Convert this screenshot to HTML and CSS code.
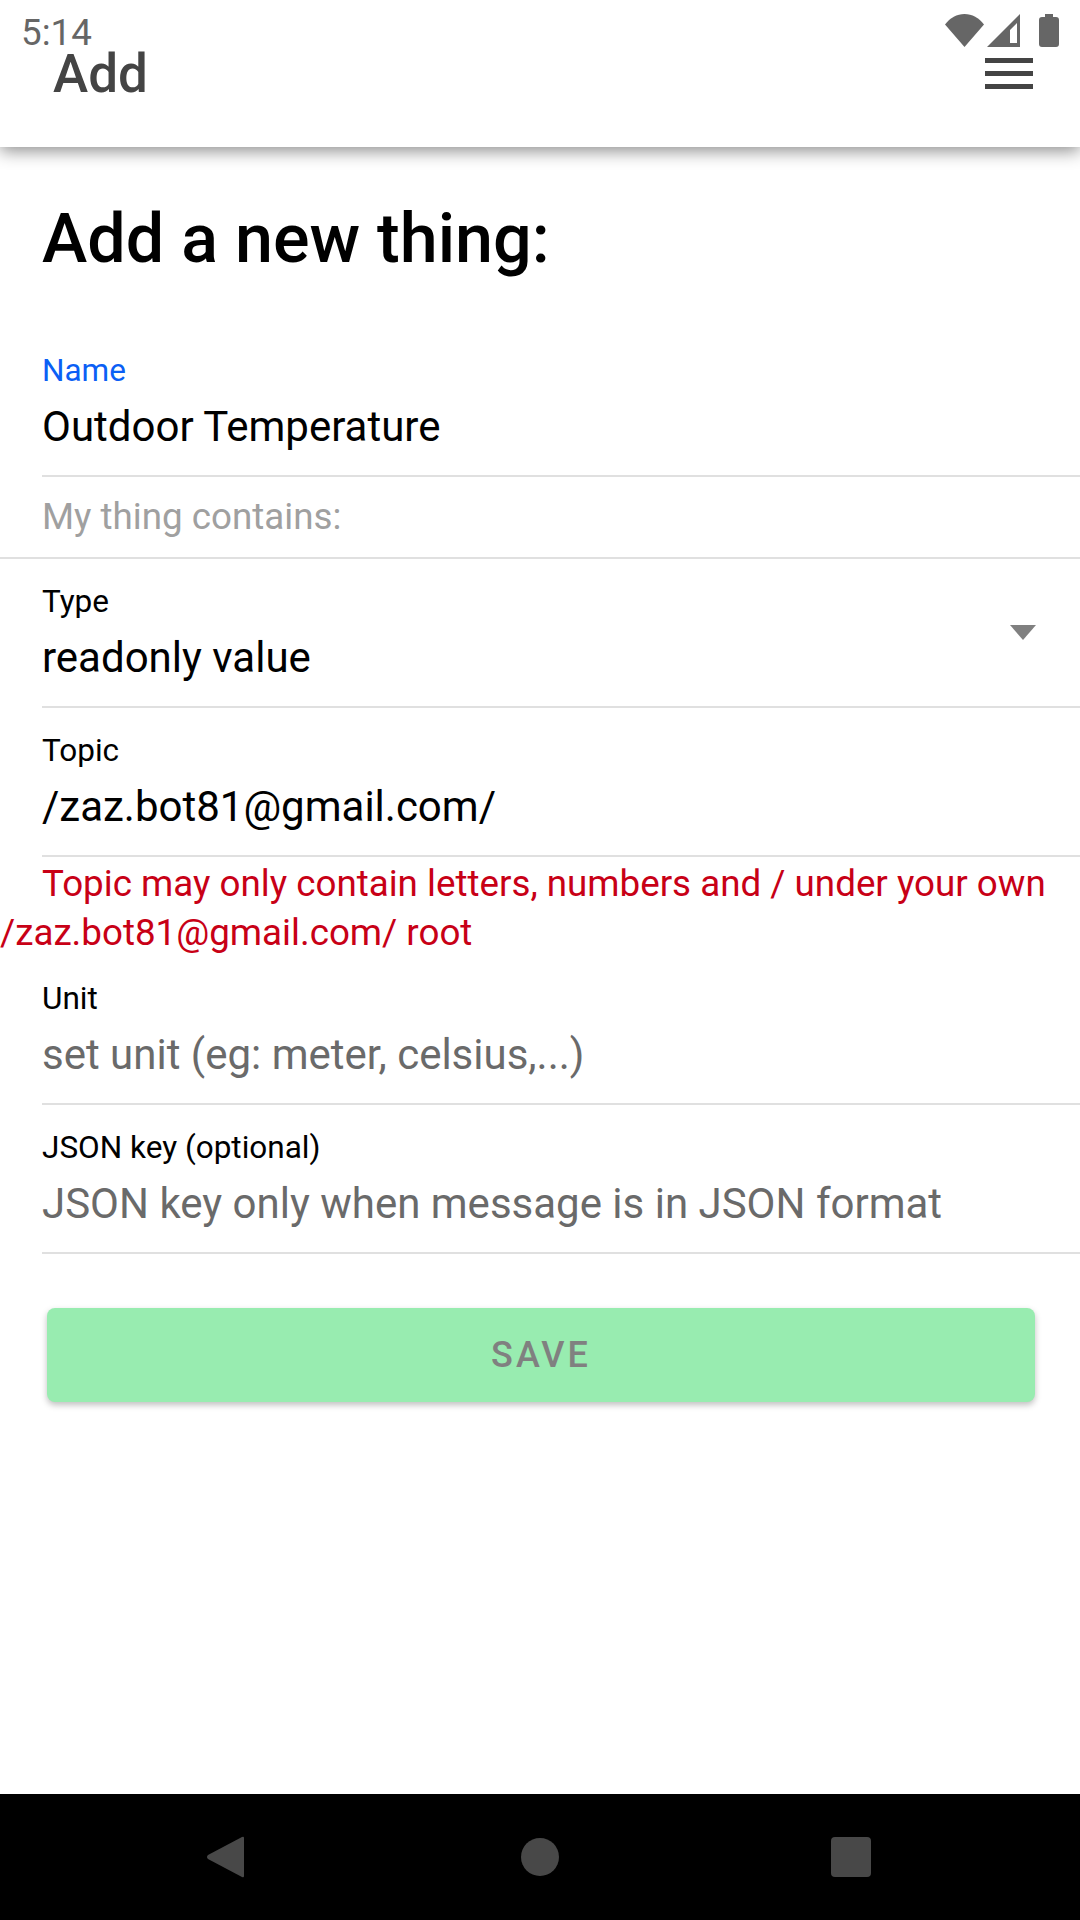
FILE: index.html
```html
<!DOCTYPE html>
<html>
<head>
  <meta charset="utf-8">
  <title>Add</title>
  <link rel="stylesheet" href="styles.css">
</head>
<body>
  <div id="app">
    <div class="status-bar">
      <span class="status-time">5:14</span>
      <div class="status-icons">
        <svg class="icon-wifi" width="39" height="33" viewBox="0 0 39 33"><path d="M0 10.500C5 4 12 0 19.500 0S34 4 39 10.500L19.500 33Z"/></svg>
        <svg class="icon-signal" width="33" height="33" viewBox="0 0 33 33"><path fill-rule="evenodd" d="M33 0V33H0ZM30 9 23 16V29H30Z"/></svg>
        <svg class="icon-battery" width="20" height="33" viewBox="0 0 20 33"><path d="M6 0H14V3H17Q20 3 20 6V30Q20 33 17 33H3Q0 33 0 30V6Q0 3 3 3H6Z"/></svg>
      </div>
    </div>

    <header class="app-header">
      <span class="app-title">Add</span>
      <div class="menu-btn"><i></i><i></i><i></i></div>
    </header>

    <main class="form">
      <h1 class="form-title">Add a new thing:</h1>

      <div class="field field-name">
        <label class="field-label field-label-active">Name</label>
        <div class="field-value">Outdoor Temperature</div>
      </div>

      <div class="section-label">My thing contains:</div>

      <div class="field field-select">
        <label class="field-label">Type</label>
        <div class="field-value">readonly value</div>
        <svg class="select-arrow" width="26" height="15" viewBox="0 0 26 15"><path d="M0 0H26L13 15Z"/></svg>
      </div>

      <div class="field">
        <label class="field-label">Topic</label>
        <div class="field-value">/zaz.bot81@gmail.com/</div>
      </div>
      <div class="field-error">Topic may only contain letters, numbers and / under your own /zaz.bot81@gmail.com/ root</div>

      <div class="field">
        <label class="field-label">Unit</label>
        <div class="field-value field-placeholder">set unit (eg: meter, celsius,...)</div>
      </div>

      <div class="field">
        <label class="field-label">JSON key (optional)</label>
        <div class="field-value field-placeholder">JSON key only when message is in JSON format</div>
      </div>

      <button class="save-btn">SAVE</button>
    </main>

    <nav class="nav-bar">
      <svg class="nav-back" width="37" height="42" viewBox="0 0 37 42"><path d="M37 2V40Q37 42 35 41L1 23Q-1 21 1 19L35 1Q37 0 37 2Z"/></svg>
      <span class="nav-home"></span>
      <span class="nav-recent"></span>
    </nav>
  </div>
</body>
</html>
```

FILE: styles.css
```css
*, *:before, *:after { box-sizing: border-box; }
html, body { height: 100%; }
body { margin: 0; padding: 0; font-family: Roboto, sans-serif; background-color: #fff; }
#app { display: flex; flex-direction: column; height: 1920px; position: relative; overflow: hidden; }

/* status bar lies over the header */
.status-bar { position: absolute; top: 0; left: 0; right: 0; z-index: 2; }
.status-time { position: absolute; left: 21px; top: 12px; font-size: 36.75px; line-height: 42px; color: #666; }
.status-icons { position: absolute; left: 945px; top: 14px; display: flex; fill: #666; }
.icon-signal { margin-left: 3px; }
.icon-battery { margin-left: 19px; }

/* app header */
.app-header {
  flex: 0 0 147px;
  position: relative;
  z-index: 1;
  display: flex;
  justify-content: space-between;
  background-color: #fff;
  box-shadow: 0 4px 16px rgba(0, 0, 0, 0.45);
  padding: 44px 47px 0 53px;
}
.app-title { font-size: 53px; line-height: 60px; font-weight: 500; color: #444; }
.menu-btn { display: flex; flex-direction: column; gap: 8px; width: 48px; padding-top: 14px; }
.menu-btn i { display: block; height: 5px; background-color: #444; }

/* form */
.form { flex: 1; display: flex; flex-direction: column; }
.form-title { margin: 0; padding: 50px 0 0 42px; font-size: 68.25px; line-height: 84px; font-weight: 500; color: #000; }

.field { position: relative; margin-left: 42px; padding-top: 25px; height: 149px; border-bottom: 2px solid #e0e0e0; }
.field-name { margin-top: 72px; padding-top: 0; height: 124px; }
.field-label { display: block; font-size: 31.5px; line-height: 36px; color: #000; }
.field-label-active { color: #0b5ff5; }
.field-value { font-size: 42px; line-height: 50px; margin-top: 13px; color: #000; }
.field-placeholder { color: #6a6a6a; }
.select-arrow { position: absolute; right: 44px; top: 66px; fill: #808080; }

.section-label {
  height: 82px;
  padding: 19px 0 0 42px;
  font-size: 36.75px;
  line-height: 42px;
  color: #a0a0a0;
  border-bottom: 2px solid #e0e0e0;
}

.field-error { font-size: 36.75px; line-height: 49px; color: #c80016; text-indent: 42px; padding-top: 2px; height: 99px; }

.save-btn {
  display: block;
  margin: 54px 45px 0 47px;
  height: 94px;
  border: 0;
  border-radius: 8px;
  background-color: #98ecb0;
  color: #808080;
  font-family: inherit;
  font-size: 36px;
  font-weight: 500;
  letter-spacing: 3px;
  box-shadow: 0 3px 6px rgba(0, 0, 0, 0.25);
}

/* android nav */
.nav-bar { flex: 0 0 126px; position: relative; background-color: #000; }
.nav-back { position: absolute; left: 207px; top: 42px; fill: #484848; }
.nav-home { position: absolute; left: 521px; top: 44px; width: 38px; height: 38px; border-radius: 50%; background-color: #484848; }
.nav-recent { position: absolute; left: 831px; top: 43px; width: 40px; height: 40px; border-radius: 4px; background-color: #484848; }
```
